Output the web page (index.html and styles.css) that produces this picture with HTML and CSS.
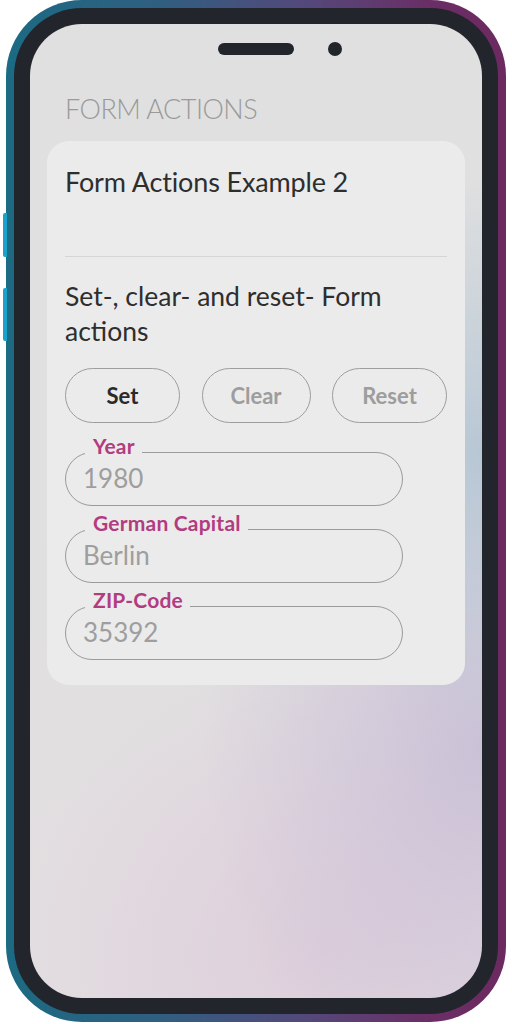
FILE: index.html
```html
<!DOCTYPE html>
<html lang="en">
<head>
<meta charset="utf-8">
<title>Form Actions</title>
<link rel="stylesheet" href="styles.css">
</head>
<body>
<div class="device">
  <span class="side-key side-key--upper"></span>
  <span class="side-key side-key--lower"></span>
  <div class="bezel">
    <div class="screen">
      <div class="notch">
        <span class="speaker"></span>
        <span class="camera"></span>
      </div>

      <h1 class="page-title">FORM ACTIONS</h1>

      <section class="card">
        <h2 class="card-title">Form Actions Example 2</h2>
        <hr class="divider">
        <p class="card-text">Set-, clear- and reset- Form actions</p>

        <div class="actions">
          <button type="button" class="pill-btn pill-btn--active">Set</button>
          <button type="button" class="pill-btn">Clear</button>
          <button type="button" class="pill-btn">Reset</button>
        </div>

        <form class="fields">
          <fieldset class="field">
            <legend class="field-label">Year</legend>
            <input class="field-input" type="text" value="1980">
          </fieldset>
          <fieldset class="field">
            <legend class="field-label">German Capital</legend>
            <input class="field-input" type="text" value="Berlin">
          </fieldset>
          <fieldset class="field">
            <legend class="field-label">ZIP-Code</legend>
            <input class="field-input" type="text" value="35392">
          </fieldset>
        </form>
      </section>
    </div>
  </div>
</div>
</body>
</html>
```

FILE: styles.css
```css
html, body {
  margin: 0;
  background: #ffffff;
}

body {
  font-family: Lato, "Open Sans", sans-serif;
}

/* ---------- device frame ---------- */
.device {
  position: relative;
  box-sizing: border-box;
  width: 500px;
  height: 1022px;
  margin-left: 6px;
  padding: 8px;
  border-radius: 76px;
  background: linear-gradient(90deg, #1c6a83 0%, #2f5f80 30%, #54487a 60%, #6a2e66 85%, #6c2a5f 100%);
}

.side-key {
  position: absolute;
  left: -3px;
  width: 4px;
  border-radius: 2px 0 0 2px;
  background: #1aa2cb;
}

.side-key--upper {
  top: 213px;
  height: 44px;
}

.side-key--lower {
  top: 288px;
  height: 53px;
}

.bezel {
  box-sizing: border-box;
  height: 100%;
  padding: 16px;
  border-radius: 68px;
  background: #22252c;
}

.screen {
  box-sizing: border-box;
  height: 100%;
  padding: 18px 17px 0;
  border-radius: 52px;
  overflow: hidden;
  background:
    radial-gradient(ellipse 200px 280px at 100% 44%, rgba(180, 197, 212, 0.9), rgba(180, 197, 212, 0) 100%),
    radial-gradient(ellipse 280px 360px at 100% 74%, rgba(196, 184, 212, 0.75), rgba(196, 184, 212, 0) 100%),
    radial-gradient(ellipse 320px 300px at 65% 95%, rgba(220, 204, 218, 0.85), rgba(220, 204, 218, 0) 100%),
    linear-gradient(180deg, #e0e0e0 0%, #e0e0e0 50%, #e3dee1 100%);
}

/* ---------- notch ---------- */
.notch {
  display: grid;
  grid-template-columns: 1fr 76px 1fr;
  align-items: center;
  height: 12px;
}

.speaker {
  grid-column: 2;
  height: 12px;
  border-radius: 6px;
  background: #22252c;
}

.camera {
  grid-column: 3;
  width: 14px;
  height: 14px;
  margin-left: 34px;
  border-radius: 50%;
  background: #22252c;
}

/* ---------- page ---------- */
.page-title {
  margin: 38px 0 15px;
  padding-left: 18px;
  font-size: 27px;
  line-height: 34px;
  font-weight: 300;
  letter-spacing: -0.5px;
  color: #9a9a9a;
}

.card {
  padding: 24px 18px 25px;
  border-radius: 22px;
  background: #ebebeb;
}

.card-title {
  margin: 0 0 57px;
  font-size: 27px;
  line-height: 34px;
  font-weight: 400;
  letter-spacing: -0.15px;
  color: #2e2e2e;
}

.divider {
  height: 1px;
  margin: 0;
  border: 0;
  background: #d5d5d5;
}

.card-text {
  margin: 22px 0 19px;
  font-size: 26.5px;
  line-height: 35px;
  color: #2e2e2e;
}

/* ---------- buttons ---------- */
.actions {
  display: grid;
  grid-template-columns: 115px 109px 115px;
  justify-content: space-between;
  margin-bottom: 13px;
}

.pill-btn {
  height: 55px;
  padding: 0;
  border: 1px solid #9d9d9d;
  border-radius: 28px;
  background: transparent;
  font-family: inherit;
  font-size: 22px;
  font-weight: 700;
  color: #9d9d9d;
}

.pill-btn--active {
  color: #2a2a2a;
}

/* ---------- outlined fields ---------- */
.fields {
  display: flex;
  flex-direction: column;
  gap: 7px;
  margin: 0;
}

.field {
  box-sizing: border-box;
  width: 338px;
  min-width: 0;
  margin: 0;
  padding: 0 0 14px 17px;
  border: 1px solid #9a9a9a;
  border-radius: 28px;
}

.field-label {
  margin-left: 2px;
  padding: 0 7px 12px 8px;
  font-size: 21px;
  line-height: 20px;
  font-weight: 700;
  letter-spacing: 0.2px;
  color: #b23c80;
}

.field-input {
  display: block;
  box-sizing: border-box;
  width: 100%;
  height: 26px;
  margin-top: -3px;
  padding: 0;
  border: 0;
  outline: none;
  background: transparent;
  font-family: inherit;
  font-size: 26px;
  line-height: 26px;
  font-weight: 400;
  color: #9e9e9e;
}
```
